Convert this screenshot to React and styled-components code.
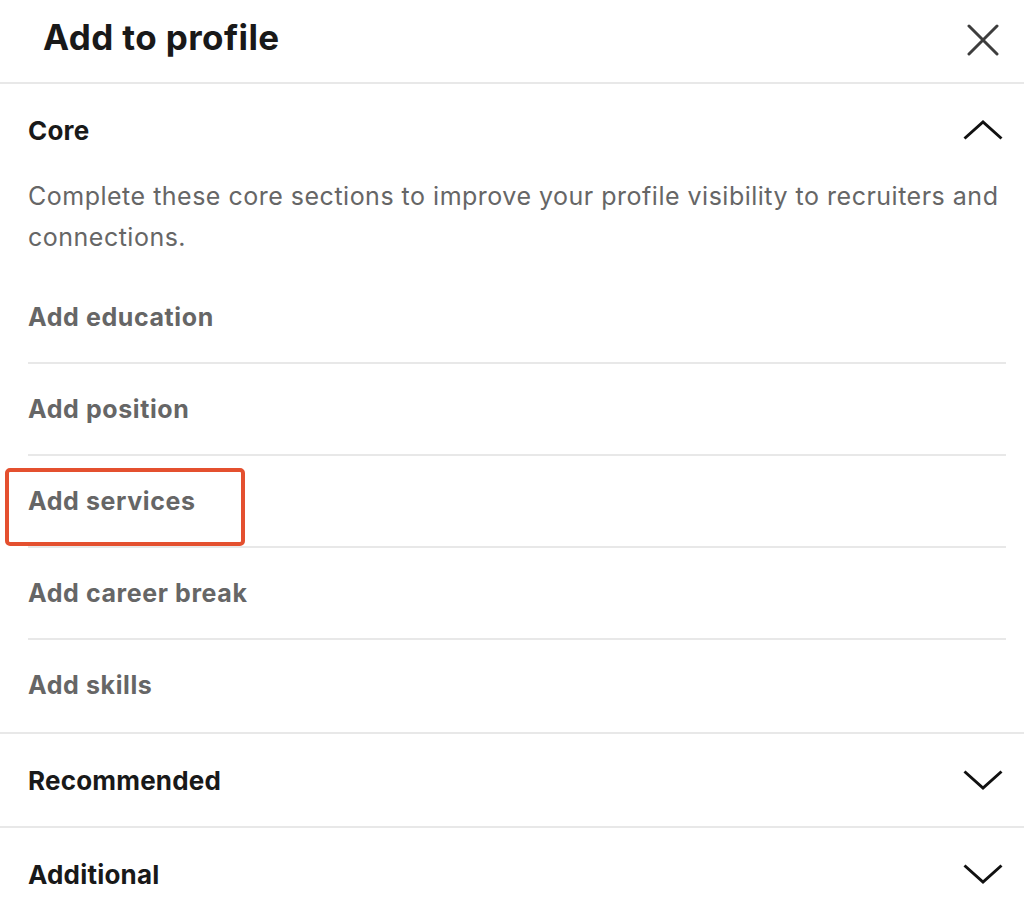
import React from "react";
import styled, { createGlobalStyle } from "styled-components";

const GlobalStyle = createGlobalStyle`
    html, body {
        margin: 0;
        padding: 0;
        background: #ffffff;
    }
    body {
        font-family: Inter, "Liberation Sans", sans-serif;
        -webkit-font-smoothing: antialiased;
    }
`;

const Modal = styled.div`
    width: 1024px;
    height: 915px;
    overflow: hidden;
    background: #fff;
`;

const Header = styled.header`
    display: flex;
    align-items: center;
    justify-content: space-between;
    height: 84px;
    padding: 0 21px 0 43px;
    border-bottom: 2px solid #e8e8e8;
    box-sizing: border-box;
`;

const Title = styled.h1`
    margin: -8px 0 0;
    font-size: 35px;
    font-weight: 700;
    color: #191919;
    letter-spacing: 0.4px;
`;

const IconButton = styled.button`
    display: flex;
    align-items: center;
    justify-content: center;
    width: 40px;
    height: 40px;
    padding: 0;
    border: none;
    background: none;
    margin-top: -2px;
`;

const Section = styled.section`
    border-bottom: ${(p) => (p.$last ? "none" : "2px solid #e8e8e8")};
`;

const SectionHead = styled.div`
    display: flex;
    align-items: center;
    justify-content: space-between;
    height: 92px;
    padding: 0 21px 0 28px;
`;

const SectionTitle = styled.h2`
    margin: 0;
    font-size: 26px;
    font-weight: 700;
    color: #191919;
    letter-spacing: 0.2px;
`;

const Description = styled.p`
    margin: 0 18px 14px 28px;
    font-size: 25px;
    line-height: 41px;
    color: #666666;
    letter-spacing: 0.5px;
`;

const ItemList = styled.ul`
    list-style: none;
    margin: 0 18px 0 28px;
    padding: 0 0 2px;
`;

const Item = styled.li`
    position: relative;
    display: flex;
    align-items: center;
    height: 90px;
    border-bottom: ${(p) => (p.$last ? "none" : "2px solid #e8e8e8")};
    font-size: 25px;
    font-weight: 700;
    color: #666666;
    letter-spacing: 0.6px;
`;

const Highlight = styled.span`
    position: absolute;
    left: -23px;
    top: 12px;
    width: 240px;
    height: 78px;
    border: 4px solid #e4502f;
    border-radius: 5px;
    box-sizing: border-box;
    pointer-events: none;
`;

function CloseIcon() {
    return (
        <svg width="32" height="32" viewBox="0 0 32 32">
            <path
                d="M2 2 L30 30 M30 2 L2 30"
                stroke="#3d3d3d"
                strokeWidth="3"
                strokeLinecap="round"
            />
        </svg>
    );
}

function Chevron({ up }) {
    return (
        <svg width="40" height="22" viewBox="0 0 40 22">
            <polyline
                points={up ? "1.5,19.5 20,3 38.5,19.5" : "1.5,2.5 20,19 38.5,2.5"}
                fill="none"
                stroke="#111"
                strokeWidth="3"
            />
        </svg>
    );
}

const coreItems = [
    "Add education",
    "Add position",
    "Add services",
    "Add career break",
    "Add skills",
];

export default function App() {
    return (
        <Modal>
            <GlobalStyle />
            <Header>
                <Title>Add to profile</Title>
                <IconButton aria-label="Dismiss">
                    <CloseIcon />
                </IconButton>
            </Header>

            <Section>
                <SectionHead>
                    <SectionTitle>Core</SectionTitle>
                    <Chevron up />
                </SectionHead>
                <Description>
                    Complete these core sections to improve your profile
                    visibility to recruiters and connections.
                </Description>
                <ItemList>
                    {coreItems.map((item, i) => (
                        <Item key={item} $last={i === coreItems.length - 1}>
                            {item}
                            {item === "Add services" && <Highlight />}
                        </Item>
                    ))}
                </ItemList>
            </Section>

            <Section>
                <SectionHead>
                    <SectionTitle>Recommended</SectionTitle>
                    <Chevron />
                </SectionHead>
            </Section>

            <Section $last>
                <SectionHead>
                    <SectionTitle>Additional</SectionTitle>
                    <Chevron />
                </SectionHead>
            </Section>
        </Modal>
    );
}
